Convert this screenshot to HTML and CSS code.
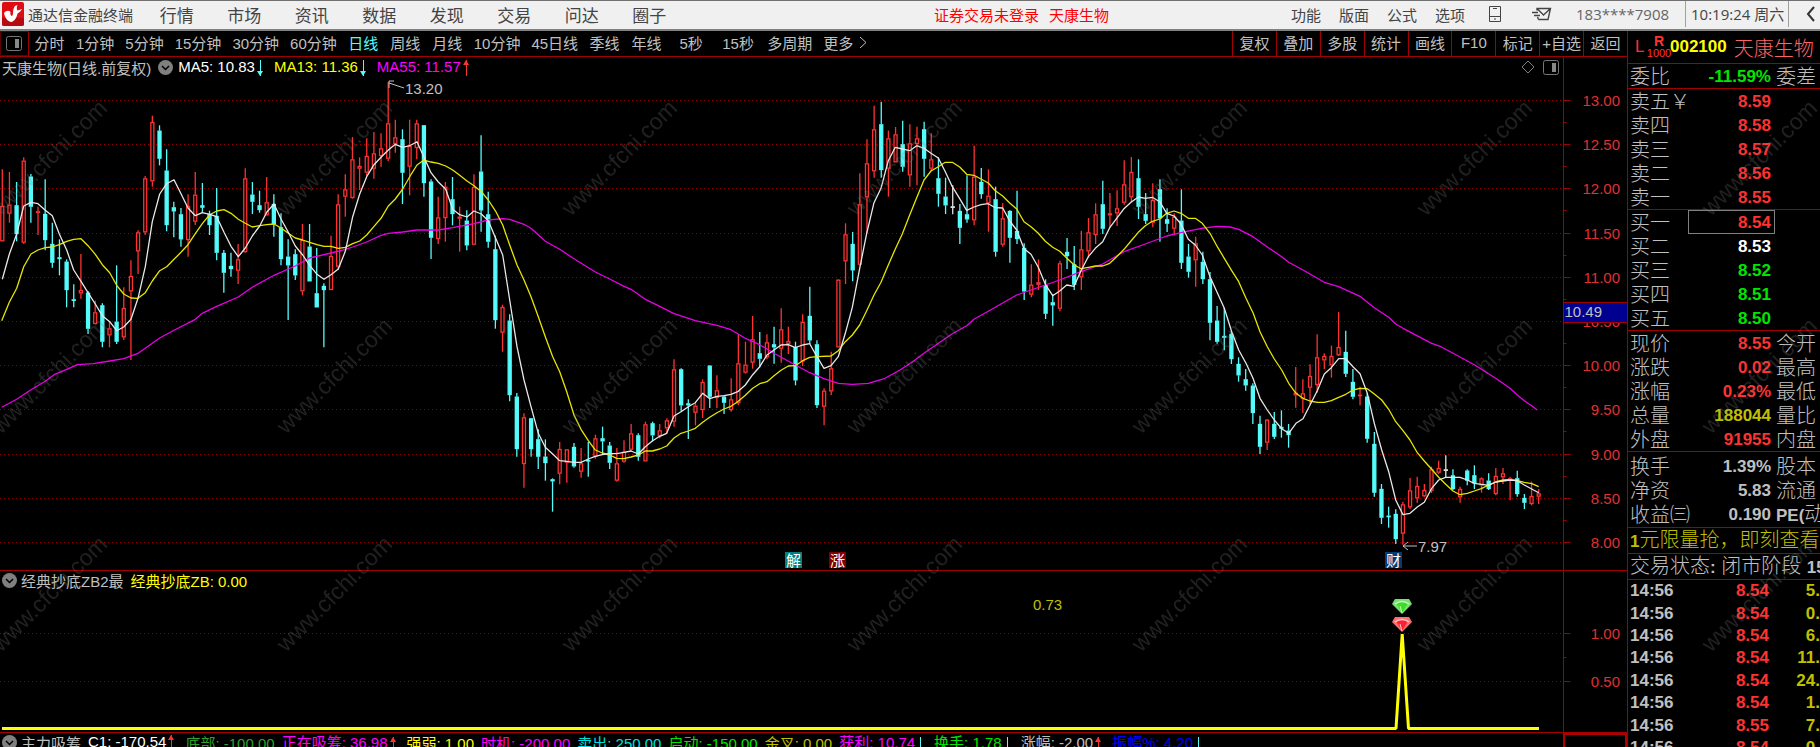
FILE: index.html
```html
<!DOCTYPE html>
<html lang="zh-CN">

<head>
    <meta charset="UTF-8">
    <meta name="viewport" content="width=device-width, initial-scale=1.0">
    <title>通达信金融终端</title>
    <link rel="stylesheet" href="styles.css">
</head>

<body>
    <!-- Top menu -->
    <header class="menubar">
        <svg class="logo" width="22" height="24" viewBox="0 0 22 24">
            <rect width="22" height="24" rx="2" fill="#e00c14"/>
            <path d="M0 16H22V22A2 2 0 0 1 20 24H2A2 2 0 0 1 0 22Z" fill="#b80812"/>
            <path d="M2 11C4 8.500 7 8 8.500 10C8 12 8.500 13.500 10 14C12 12 10 8 13 4L15.500 3C14.500 5 14.500 7 15.500 8.500L20 7C19 9.500 17 10.500 15.500 11.500C14.500 16 12.500 19.500 9 20C5 19 3 15.500 2 11Z" fill="#fff"/>
        </svg>
        <span class="app-name">通达信金融终端</span>
        <nav class="main-menu">
            <a href="#">行情</a>
            <a href="#">市场</a>
            <a href="#">资讯</a>
            <a href="#">数据</a>
            <a href="#">发现</a>
            <a href="#">交易</a>
            <a href="#">问达</a>
            <a href="#">圈子</a>
        </nav>
        <div class="login-state"><span>证券交易未登录</span><span>天康生物</span></div>
        <nav class="tool-menu">
            <a href="#">功能</a>
            <a href="#">版面</a>
            <a href="#">公式</a>
            <a href="#">选项</a>
        </nav>
        <button class="icon-btn phone" aria-label="手机">
            <svg width="14" height="18" viewBox="0 0 14 18" fill="none" stroke="#444">
                <path d="M1.500 1.500H12.500V16.500H1.500ZM1.500 11.500H12.500M5 3.500H9M6 14H8"/>
            </svg>
        </button>
        <button class="icon-btn mail" aria-label="消息">
            <svg width="20" height="14" viewBox="0 0 20 14" fill="none" stroke="#444" stroke-width="1.400">
                <path d="M5 3.500V1.500H18.500L16 12.500H6.500M5.500 2L11.500 8L18.500 1.500M0 5.500H6M2 8.500H8M6.500 12.500L5.500 10"/>
            </svg>
        </button>
        <span class="account">183****7908</span>
        <span class="clock">10:19:24 周六</span>
        <button class="icon-btn back" aria-label="收起">
            <svg width="10" height="16" viewBox="0 0 10 16" fill="none" stroke="#333" stroke-width="2">
                <path d="M8 1L2 8L8 15"/>
            </svg>
        </button>
    </header>

    <main class="workspace">
        <div class="left">
            <!-- Period toolbar -->
            <div class="toolbar">
                <button class="side-toggle" aria-label="侧栏">
                    <svg width="16" height="15" viewBox="0 0 16 15" fill="none" stroke="#777">
                        <rect x="0.500" y="0.500" width="15" height="14" rx="2"/>
                        <rect x="9" y="3" width="4" height="9" fill="#888" stroke="none"/>
                    </svg>
                </button>
                <div class="periods">
                    <button>分时</button>
                    <button>1分钟</button>
                    <button>5分钟</button>
                    <button>15分钟</button>
                    <button>30分钟</button>
                    <button>60分钟</button>
                    <button class="active">日线</button>
                    <button>周线</button>
                    <button>月线</button>
                    <button>10分钟</button>
                    <button>45日线</button>
                    <button>季线</button>
                    <button>年线</button>
                    <button class="seconds">5秒</button>
                    <button class="seconds">15秒</button>
                    <button>多周期</button>
                    <button>更多<svg class="more" width="8" height="13" viewBox="0 0 8 13" fill="none" stroke="#c0c0c0"><path d="M1 1L7 6.500L1 12"/></svg></button>
                </div>
                <div class="actions">
                    <button>复权</button>
                    <button>叠加</button>
                    <button>多股</button>
                    <button>统计</button>
                    <button>画线</button>
                    <button>F10</button>
                    <button>标记</button>
                    <button>+自选</button>
                    <button>返回</button>
                </div>
            </div>

            <!-- K line panel -->
            <section class="panel">
                <svg class="plot" id="kline"></svg>
                <div class="legend">
                    <span class="name">天康生物(日线.前复权)</span>
                    <button class="drop" aria-label="指标"><svg width="15" height="15" viewBox="0 0 15 15"><circle cx="7.500" cy="7.500" r="7.500" fill="#808080"/><path d="M4 6L7.500 9.500L11 6" fill="none" stroke="#000" stroke-width="1.500"/></svg></button>
                    <span class="white">MA5: 10.83<i class="down"></i></span>
                    <span class="yellow">MA13: 11.36<i class="down"></i></span>
                    <span class="magenta">MA55: 11.57<i class="up"></i></span>
                    <span class="corner">
                        <svg width="14" height="14" viewBox="0 0 14 14" fill="none" stroke="#808080"><path d="M7 1L13 7L7 13L1 7Z"/></svg>
                        <svg width="16" height="15" viewBox="0 0 16 15" fill="none" stroke="#777"><rect x="0.500" y="0.500" width="15" height="14" rx="2"/><rect x="9" y="3" width="4" height="9" fill="#888" stroke="none"/></svg>
                    </span>
                </div>
            </section>

            <!-- Indicator panel -->
            <section class="panel">
                <svg class="plot" id="signal"></svg>
                <div class="legend sub">
                    <button class="drop" aria-label="指标"><svg width="15" height="15" viewBox="0 0 15 15"><circle cx="7.500" cy="7.500" r="7.500" fill="#808080"/><path d="M4 6L7.500 9.500L11 6" fill="none" stroke="#000" stroke-width="1.500"/></svg></button>
                    <span class="name">经典抄底ZB2最</span>
                    <span class="yellow">经典抄底ZB: 0.00</span>
                </div>
            </section>

            <!-- Third panel, only its legend is in view -->
            <section class="panel last">
                <div class="legend sub">
                    <button class="drop" aria-label="指标"><svg width="15" height="15" viewBox="0 0 15 15"><circle cx="7.500" cy="7.500" r="7.500" fill="#808080"/><path d="M4 6L7.500 9.500L11 6" fill="none" stroke="#000" stroke-width="1.500"/></svg></button>
                    <span class="name">主力吸筹</span>
                    <span class="white">C1: -170.54<i class="up"></i></span>
                    <span class="dark-green">底部: -100.00</span>
                    <span class="magenta">正在吸筹: 36.98<i class="up"></i></span>
                    <span class="yellow">强弱: 1.00</span>
                    <span class="magenta">时机: -200.00</span>
                    <span class="cyan">卖出: 250.00</span>
                    <span class="green">启动: -150.00</span>
                    <span class="dim-yellow">金叉: 0.00</span>
                    <span class="magenta">获利: 10.74<i class="down"></i></span>
                    <span class="green">换手: 1.78<i class="down"></i></span>
                    <span class="grey">涨幅: -2.00<i class="up"></i></span>
                    <span class="blue">振幅%: 4.20<i class="down"></i></span>
                </div>
                <div class="axis-box"></div>
            </section>
        </div>

        <!-- Quote panel -->
        <aside class="quote">
            <div class="stock">
                <span class="tag">L</span>
                <span class="rank"><b>R</b><small>1000</small></span>
                <span class="code">002100</span>
                <span class="stock-name">天康生物</span>
            </div>
            <table class="rows">
                <tr><th>委比</th><td class="green">-11.59%</td><th>委差</th></tr>
            </table>
            <table class="rows">
                <tr><th>卖五￥</th><td class="red">8.59</td><th></th></tr>
                <tr><th>卖四</th><td class="red">8.58</td><th></th></tr>
                <tr><th>卖三</th><td class="red">8.57</td><th></th></tr>
                <tr><th>卖二</th><td class="red">8.56</td><th></th></tr>
                <tr><th>卖一</th><td class="red">8.55</td><th></th></tr>
            </table>
            <table class="rows">
                <tr><th>买一</th><td class="red boxed">8.54</td><th></th></tr>
                <tr><th>买二</th><td class="white">8.53</td><th></th></tr>
                <tr><th>买三</th><td class="green">8.52</td><th></th></tr>
                <tr><th>买四</th><td class="green">8.51</td><th></th></tr>
                <tr><th>买五</th><td class="green">8.50</td><th></th></tr>
            </table>
            <table class="rows">
                <tr><th>现价</th><td class="red">8.55</td><th>今开</th></tr>
                <tr><th>涨跌</th><td class="red">0.02</td><th>最高</th></tr>
                <tr><th>涨幅</th><td class="red">0.23%</td><th>最低</th></tr>
                <tr><th>总量</th><td class="dim-yellow">188044</td><th>量比</th></tr>
                <tr><th>外盘</th><td class="red">91955</td><th>内盘</th></tr>
            </table>
            <table class="rows extra">
                <tr><th>换手</th><td>1.39%</td><th>股本</th></tr>
                <tr><th>净资</th><td>5.83</td><th>流通</th></tr>
                <tr><th>收益㈢</th><td>0.190</td><th><b>PE(</b>动</th></tr>
            </table>
            <a class="promo" href="#"><b>1</b>元限量抢，即刻查看</a>
            <div class="status">交易状态<b>:</b> 闭市阶段 <b>15</b></div>
            <table class="ticks">
                <tr><td>14:56</td><td class="red">8.54</td><td class="dim-yellow">5.</td></tr>
                <tr><td>14:56</td><td class="red">8.54</td><td class="dim-yellow">0.</td></tr>
                <tr><td>14:56</td><td class="red">8.54</td><td class="dim-yellow">6.</td></tr>
                <tr><td>14:56</td><td class="red">8.54</td><td class="dim-yellow">11.</td></tr>
                <tr><td>14:56</td><td class="red">8.54</td><td class="dim-yellow">24.</td></tr>
                <tr><td>14:56</td><td class="red">8.54</td><td class="dim-yellow">1.</td></tr>
                <tr><td>14:56</td><td class="red">8.55</td><td class="dim-yellow">7.</td></tr>
                <tr><td>14:56</td><td class="red">8.54</td><td class="dim-yellow">0.</td></tr>
            </table>
        </aside>
    </main>

    <!-- Watermark over the whole window -->
    <svg class="watermark">
        <defs>
            <pattern id="mark" x="-20" y="95" width="285" height="218" patternUnits="userSpaceOnUse">
                <text x="21" y="122" transform="rotate(-45 21 122)">www.cfchi.com</text>
            </pattern>
        </defs>
        <rect width="100%" height="100%" fill="url(#mark)"/>
    </svg>

    <script src="chart.js"></script>
</body>

</html>
```

FILE: styles.css
```css
* {
    box-sizing: border-box;
}
body {
    margin: 0;
    height: 100vh;
    display: flex;
    flex-direction: column;
    overflow: hidden;
    background: #000;
    color: #c0c0c0;
    font-family: "Liberation Sans", "Noto Sans CJK SC", sans-serif;
    font-size: 15px;
    white-space: nowrap;
}
button {
    margin: 0;
    padding: 0;
    border: 0;
    background: none;
    color: inherit;
    font: inherit;
}
a {
    color: inherit;
    text-decoration: none;
}
svg {
    display: block;
}

/* Text colours */
.white { color: #fff; }
.grey { color: #c0c0c0; }
.yellow { color: #ff0; }
.dim-yellow { color: #c0c000; }
.magenta { color: #f0f; }
.cyan { color: #00e0e0; }
.green { color: #00e600; }
.dark-green { color: #2fa02f; }
.blue { color: #00f; }
.red { color: #ff3232; }

/* Top menu */
.menubar {
    height: 31px;
    flex: none;
    display: flex;
    align-items: center;
    padding-bottom: 2px;
    background: #f0f0f0;
    border-top: 1px solid #707070;
    border-bottom: 2px solid #808080;
    color: #444;
}
.logo {
    margin-left: 2px;
}
.app-name {
    margin-left: 4px;
}
.main-menu {
    width: 540px;
    margin-left: 10px;
    display: grid;
    grid-template-columns: repeat(8, 1fr);
    text-align: center;
    font-size: 17px;
}
.login-state {
    display: flex;
    gap: 10px;
    margin-left: auto;
    margin-right: 182px;
    color: #f00;
}
.tool-menu {
    display: flex;
    gap: 18px;
}
.phone {
    margin-left: 23px;
}
.mail {
    margin-left: 30px;
}
.account {
    margin-left: 24px;
    width: 109px;
    font-family: "Open Sans", "Noto Sans CJK SC", sans-serif;
    color: #666;
}
.clock {
    width: 104px;
    padding-left: 5px;
    line-height: 26px;
    border-left: 1px solid #a0a0a0;
    border-right: 1px solid #a0a0a0;
    font-family: "Open Sans", "Noto Sans CJK SC", sans-serif;
}
.back {
    margin: 0 4px 0 17px;
}

/* Workspace */
.workspace {
    flex: 1;
    min-height: 0;
    display: grid;
    grid-template-columns: 1fr 193px;
}
.left {
    min-width: 0;
    min-height: 0;
    display: grid;
    grid-template-rows: 26px 514fr 162fr 14px;
    grid-template-columns: 100%;
}
.toolbar {
    display: flex;
    border-bottom: 1px solid #a00000;
}
.toolbar button {
    padding-bottom: 2px;
}
.toolbar .side-toggle {
    width: 29px;
    padding: 0 0 0 5px;
    border: 1px solid #600000;
    border-right-color: #a00000;
}
.periods {
    display: flex;
    gap: 11px;
    padding-left: 5px;
}
.periods button {
    min-width: 31px;
}
.periods .seconds {
    min-width: 36px;
}
.periods .active {
    color: #54fcfc;
}
.more {
    display: inline-block;
    margin-left: 6px;
}
.actions {
    width: 395px;
    margin-left: auto;
    display: grid;
    grid-template-columns: repeat(9, 1fr);
}
.actions button {
    border-left: 1px solid #a00000;
}

/* Chart panels */
.panel {
    position: relative;
    min-height: 0;
    overflow: hidden;
    border-bottom: 1px solid #a00000;
}
.plot {
    position: absolute;
    top: 0;
    left: 0;
    width: 100%;
    height: 100%;
    font-size: 15px;
}
.legend {
    position: relative;
    display: flex;
    align-items: center;
    height: 20px;
    padding-left: 2px;
}
.legend .drop {
    margin: 0 5px 0 7px;
}
.legend span + span {
    margin-left: 7px;
}
.legend i {
    position: relative;
    display: inline-block;
    width: 1px;
    height: 16px;
    margin: 0 6px 0 5px;
    vertical-align: middle;
    background: currentColor;
}
.legend i::after {
    content: "";
    position: absolute;
    left: -3px;
    border: 3px solid transparent;
}
.legend .down {
    color: #54fcfc;
}
.legend .down::after {
    bottom: 0;
    border-top: 5px solid #54fcfc;
    border-bottom: 0;
}
.legend .up {
    color: #ff3232;
}
.legend .up::after {
    top: 0;
    border-bottom: 5px solid #ff3232;
    border-top: 0;
}
.legend .corner {
    display: flex;
    gap: 8px;
    margin-left: auto;
    padding-right: 68px;
}
.legend.sub {
    height: 18px;
}
.legend.sub .drop {
    margin: 0 4px 0 0;
}
.last {
    display: grid;
    grid-template-columns: 1fr 64px;
    border-bottom: 0;
}
.axis-box {
    border: solid #b00000;
    border-width: 2px 2px 0;
}

/* Chart drawing */
.grid-line {
    stroke: #980000;
    stroke-dasharray: 1 3;
}
.axis {
    stroke: #a00000;
}
.axis-text {
    fill: #e03030;
    text-anchor: end;
}
.rise,
.fall,
.flat {
    stroke-width: 1.3;
}
.rise {
    fill: #000;
    stroke: #ff3232;
}
.fall {
    fill: #54fcfc;
    stroke: #54fcfc;
}
.flat {
    fill: #e0e0e0;
    stroke: #e0e0e0;
}
.line {
    fill: none;
    stroke-width: 1.3;
    stroke-linejoin: round;
}
.ma5 { stroke: #e8e8e8; }
.ma13 { stroke: #e6e600; }
.ma55 { stroke: #e800e8; }
.note { fill: #c0c0c0; }
.note-line {
    fill: none;
    stroke: #c0c0c0;
}
.cursor-box {
    fill: #000090;
    stroke: #a00000;
}
.badge-text {
    fill: #fff;
    text-anchor: middle;
}
.signal-line {
    fill: none;
    stroke: #ff0;
    stroke-width: 3;
}

/* Quote panel */
.quote {
    min-width: 0;
    min-height: 0;
    overflow: hidden;
    border-left: 1px solid #a00000;
    font-size: 20px;
    font-weight: 300;
}
.quote b,
.quote td {
    font-size: 17px;
    font-weight: 700;
}
.stock {
    display: flex;
    align-items: center;
    height: 33px;
    padding-left: 7px;
    border-bottom: 1px solid #a00000;
}
.tag {
    width: 13px;
    font-size: 17px;
    color: #ff3232;
}
.rank {
    display: flex;
    flex-direction: column;
    width: 22px;
    align-items: center;
    color: #ff3232;
}
.quote .rank b {
    font-size: 14px;
    line-height: 13px;
}
.rank small {
    font-size: 11px;
    line-height: 11px;
}
.code {
    font-size: 17px;
    font-weight: 700;
    color: #ff0;
}
.stock-name {
    margin-left: 7px;
    color: #ff6464;
}
.rows {
    width: 100%;
    table-layout: fixed;
    border-collapse: separate;
    border-spacing: 0;
    border-bottom: 1px solid #a00000;
}
.rows tr {
    height: 24px;
}
.rows th,
.rows td {
    height: 24px;
    padding: 2px 0 0;
    line-height: 20px;
    font-weight: 300;
}
.rows th {
    width: 60px;
    padding-left: 2px;
    text-align: left;
}
.rows td {
    width: 87px;
    padding-right: 3px;
    border: 1px solid transparent;
    text-align: right;
    font-weight: 700;
}
.rows th:last-child {
    width: 45px;
    padding-left: 1px;
}
.rows .boxed {
    border-color: #808080;
}
.extra {
    padding: 2px 0 1px;
}
.promo,
.status {
    display: block;
    height: 26px;
    padding-left: 2px;
    line-height: 25px;
    border-bottom: 1px solid #a00000;
}
.promo {
    color: #c0c000;
}
.ticks {
    width: 100%;
    table-layout: fixed;
    border-collapse: collapse;
}
.ticks td {
    height: 3vh;
    padding: 0 0 0 2px;
    line-height: 20px;
}
.ticks td + td {
    text-align: right;
}
.ticks td:nth-child(2) {
    width: 80px;
    padding-right: 3px;
}
.ticks td:last-child {
    width: 48px;
}

/* Watermark */
.watermark {
    position: fixed;
    top: 0;
    left: 0;
    width: 100%;
    height: 100%;
    pointer-events: none;
}
.watermark text {
    font-size: 23px;
    fill: #808080;
    fill-opacity: 0.25;
}
```

FILE: chart.js
```js
// Candles: kind (r = rise, c = fall, w = flat), high, body top, body bottom, low.
// Levels are in thirds of a unit of the base layout.
const candles = `r298,408,514,514 r306,404,431,458 c336,406,492,514 r262,272,518,522 c312,320,410,458 r410,424,427,495
c328,432,510,541 c458,522,578,593 c508,562,567,616 c568,575,660,712 c643,688,690,712 r552,660,670,686
c663,668,776,792 r692,727,762,762 c700,706,815,832 r754,775,796,832 c586,755,815,822 r652,714,802,810
r571,618,664,870 r481,487,544,612 r318,325,487,495 r137,156,334,350 c166,182,266,286 c238,302,465,484
c395,412,424,502 c414,433,508,530 r373,408,510,560 r306,374,455,465 c339,406,413,428 c422,432,465,495
c354,438,548,571 c540,549,608,668 c548,588,597,620 r522,568,602,642 r295,325,546,548 c336,374,395,432
c362,406,420,428 r321,397,436,436 c373,402,462,500 c430,472,567,586 c508,560,586,750 c538,553,616,630
r462,510,664,676 c462,530,634,634 c534,670,712,712 c640,648,660,832 r497,558,660,660 r373,403,590,600
r313,358,380,440 r201,268,384,386 r262,288,296,360 r205,258,308,318 r186,250,296,326 r190,235,258,290
r36,160,266,274 r149,202,222,248 c178,208,308,402 r149,228,290,376 r149,160,234,268 c166,166,339,380
c328,335,503,567 r380,442,507,522 r336,350,444,515 c321,388,432,466 r410,440,446,545 c421,452,526,541
r313,351,524,524 c196,305,421,485 c365,433,515,533 c497,538,750,776 r704,711,788,845 c733,752,975,994
c969,980,1137,1160 r1030,1042,1182,1253 c1045,1045,1137,1160 c1078,1108,1160,1197 c1108,1160,1179,1232 c1225,1228,1234,1325
r1116,1137,1211,1243 r1138,1138,1178,1238 c1119,1131,1189,1193 r1134,1180,1205,1223 c1116,1170,1174,1220 r1094,1105,1160,1166
c1070,1105,1114,1155 c1116,1127,1178,1197 r1134,1180,1232,1235 r1111,1145,1175,1178 r1062,1090,1139,1145 c1090,1096,1160,1172
r1055,1063,1174,1174 c1055,1060,1096,1114 r1062,1081,1098,1105 r1045,1051,1075,1090 r868,898,1055,1070 c895,898,1006,1024
c988,1000,1006,1107 r1000,1007,1028,1066 r928,936,1020,1044 c886,887,980,1014 r916,961,984,1014 c978,980,998,1032
r925,988,1020,1025 r793,880,1000,1006 r815,884,908,911 r738,808,878,896 c786,850,866,892 r793,817,862,868
c770,823,832,881 r715,778,836,878 r770,813,822,852 c815,832,931,946 r733,756,874,888 c650,738,811,822
c811,823,1005,1014 r955,962,1010,1066 r845,895,964,975 r628,629,832,832 r460,493,574,642 c486,522,601,634
r310,403,584,586 r208,280,382,490 r107,178,304,323 c95,163,300,323 r182,205,296,380 r171,193,277,277
c152,223,290,305 r163,220,316,350 r170,205,222,346 c155,178,266,320 r190,268,296,304 c262,325,371,410
c323,380,406,432 w346,409,410,433 c402,423,473,522 c316,433,448,458 r227,320,451,466 c294,336,372,386
r298,377,400,485 c350,388,545,560 r400,445,524,530 c421,423,503,578 c362,483,507,522 c520,534,664,690
r583,644,674,682 r568,637,644,660 c628,646,731,747 c672,697,706,767 r572,580,716,724 c504,546,558,597
c528,583,644,660 r482,538,622,660 r444,487,544,564 r400,433,495,522 c332,403,476,492 r369,430,436,473
r361,415,430,468 r271,343,398,404 r261,306,382,397 c268,325,410,447 c369,433,452,462 r340,390,458,472
c328,358,445,515 c415,448,461,486 r430,440,476,496 c358,452,578,597 c522,560,605,623 r500,520,571,650
c545,576,627,642 c606,628,758,811 c708,752,815,821 c713,798,803,841 c783,792,867,882 c862,882,916,935
c897,928,946,962 c940,947,1029,1062 c1037,1062,1130,1152 r1047,1049,1118,1140 c1026,1062,1100,1107 c1021,1071,1076,1103
c1062,1082,1095,1133 r891,968,976,1013 r928,970,986,1029 r883,918,953,1002 r793,862,945,968 r850,858,871,897
r827,858,886,923 r726,831,856,858 c782,846,911,921 c897,936,980,988 r950,974,977,1006 c970,980,1106,1118
c1086,1122,1268,1280 c1242,1257,1343,1362 c1310,1337,1340,1373 c1318,1332,1407,1422 r1295,1303,1391,1424 r1224,1261,1312,1317
r1220,1248,1285,1298 r1242,1260,1279,1282 r1190,1198,1262,1269 r1172,1194,1208,1212 w1156,1198,1200,1222 c1198,1216,1257,1260
r1250,1257,1282,1298 c1198,1202,1232,1246 c1186,1216,1240,1257 r1222,1225,1246,1268 c1210,1232,1257,1260 r1194,1218,1272,1276
r1194,1210,1222,1242 r1220,1225,1230,1291 c1202,1225,1272,1280 c1272,1284,1298,1317 r1235,1278,1302,1306 r1257,1270,1280,1302`;

const ma5 = `7,628 28,553 50,492 71,408 93,397 114,401 136,421 157,437 178,492 200,540 221,600 243,634 264,668 286,702 307,737
329,755 350,782 371,771 393,748 414,685 436,590 457,455 479,372 500,341 522,329 543,371 564,414 586,437 607,428 629,433
650,440 672,487 693,529 715,560 736,534 757,498 779,468 800,427 822,402 843,447 865,487 886,528 908,555 929,586 951,613
972,628 993,614 1015,597 1036,544 1058,440 1079,372 1100,320 1122,284 1143,262 1165,240 1186,223 1208,232 1229,227
1251,215 1272,262 1293,308 1315,336 1337,358 1358,418 1379,434 1401,441 1422,423 1444,432 1465,452 1487,505 1508,555
1529,690 1551,830 1572,930 1593,1010 1615,1090 1636,1132 1658,1152 1679,1172 1700,1174 1722,1177 1743,1177 1765,1167
1786,1159 1807,1154 1829,1151 1850,1151 1872,1147 1893,1143 1915,1152 1936,1130 1957,1113 1979,1099 2000,1090 2022,1038
2043,1025 2065,1010 2086,998 2108,970 2129,986 2151,979 2172,977 2193,973 2215,964 2236,945 2258,914 2279,890 2301,855
2322,840 2343,825 2365,824 2386,833 2408,825 2429,821 2451,860 2472,895 2493,887 2515,860 2536,790 2557,712 2579,595
2600,490 2622,398 2643,355 2665,272 2686,232 2707,237 2729,242 2750,227 2772,235 2793,250 2815,264 2836,305 2857,350
2879,386 2900,421 2922,411 2943,404 2965,401 2986,413 3008,414 3029,453 3050,480 3072,536 3093,553 3115,592 3136,643
3158,677 3179,663 3200,645 3222,649 3243,602 3265,560 3286,535 3308,515 3329,473 3350,445 3372,416 3393,397 3415,381
3436,385 3457,382 3479,395 3500,430 3522,438 3543,462 3565,508 3586,525 3607,555 3630,620 3652,668 3673,715 3695,785
3716,840 3738,880 3759,925 3780,985 3802,1020 3823,1050 3845,1076 3866,1090 3888,1060 3909,1046 3930,1005 3952,962
3973,912 3994,893 4016,866 4037,866 4059,890 4080,911 4102,970 4123,1060 4145,1140 4166,1205 4187,1290 4209,1334
4230,1330 4252,1311 4273,1297 4295,1255 4316,1230 4337,1222 4380,1222 4402,1230 4423,1240 4466,1246 4487,1236 4530,1230
4552,1232 4573,1245 4595,1257 4616,1268`;

const ma13 = `5,752 28,697 50,655 71,590 93,552 114,540 136,533 157,531 178,524 200,514 221,508 243,506 264,527 286,553
307,584 329,608 350,646 371,672 393,684 414,685 436,668 457,633 479,602 500,590 522,568 543,547 564,524 586,491 607,461
629,434 650,423 672,419 693,430 715,448 736,460 757,471 779,467 800,464 822,462 843,474 865,490 886,504 908,510 929,517
951,524 972,529 993,529 1015,535 1036,532 1058,521 1079,513 1100,495 1122,469 1143,445 1165,408 1186,387 1208,357
1229,320 1251,285 1272,270 1293,276 1315,280 1337,288 1358,300 1379,316 1401,333 1422,347 1444,365 1465,390 1487,424
1508,465 1529,525 1551,585 1572,630 1593,680 1615,740 1636,800 1658,860 1679,905 1700,965 1722,1035 1743,1078 1765,1112
1786,1140 1807,1149 1829,1155 1850,1165 1872,1166 1893,1161 1915,1155 1936,1143 1957,1143 1979,1137 2000,1128 2022,1104
2043,1090 2065,1083 2086,1075 2108,1057 2129,1042 2151,1028 2172,1017 2193,1009 2215,994 2236,976 2258,955 2279,941
2301,935 2322,917 2343,901 2365,888 2386,887 2408,872 2429,862 2451,860 2493,858 2515,842 2536,815 2557,795 2579,765
2600,722 2622,675 2643,637 2665,585 2686,537 2707,492 2729,435 2750,383 2772,330 2793,303 2815,290 2836,277 2857,277
2879,291 2900,313 2922,316 2943,327 2965,339 2986,362 3008,378 3029,399 3050,417 3072,455 3093,470 3115,490 3136,514
3158,532 3179,544 3200,564 3222,584 3243,596 3265,592 3286,588 3308,588 3329,580 3350,560 3372,538 3393,513 3415,487
3436,467 3457,454 3479,447 3500,430 3522,423 3543,430 3565,445 3586,445 3607,460 3630,490 3652,530 3673,565 3695,602
3716,635 3738,685 3759,728 3780,785 3802,830 3823,867 3845,900 3866,940 3888,970 3909,985 3930,993 3952,997 3973,997
3994,992 4016,982 4037,973 4059,960 4080,955 4102,956 4123,972 4145,990 4166,1018 4187,1055 4209,1082 4230,1110
4252,1148 4273,1173 4295,1198 4316,1222 4337,1243 4359,1263 4380,1274 4402,1270 4423,1263 4444,1256 4466,1245 4487,1236
4509,1230 4530,1229 4552,1232 4573,1237 4595,1241 4616,1250`;

const ma55 = `5,1012 50,988 93,959 136,934 164,913 200,898 232,884 280,881 329,873 371,866 414,850 436,835 479,804 522,781
586,748 607,730 650,709 715,681 757,652 822,616 865,597 886,588 929,564 993,549 1036,538 1058,531 1100,516 1143,496
1165,490 1208,486 1251,480 1315,480 1358,473 1422,461 1465,450 1508,446 1529,448 1572,463 1593,475 1636,514 1679,538
1722,566 1786,606 1829,627 1872,649 1893,658 1936,688 1979,709 2022,731 2086,752 2151,766 2193,779 2236,805 2279,824
2322,850 2386,885 2429,908 2472,926 2515,940 2557,943 2605,940 2655,925 2700,900 2742,872 2772,850 2857,791 2900,767
2922,748 2986,712 3050,675 3093,660 3179,630 3243,605 3308,582 3372,545 3436,522 3500,498 3543,488 3586,479 3612,474
3652,469 3690,471 3716,478 3759,500 3802,531 3845,560 3866,577 3909,600 3973,637 4016,650 4080,679 4123,713 4166,742
4187,762 4209,775 4295,820 4323,830 4359,850 4423,884 4487,925 4530,955 4552,975 4573,992 4595,1007 4612,1020`;

// Base size of the panels, everything is scaled from it
const BASE_WIDTH = 1627;
const AXIS_WIDTH = 64;

function add(parent, name, attrs, text) {
    const el = document.createElementNS('http://www.w3.org/2000/svg', name);
    for (const key in attrs) {
        el.setAttribute(key, attrs[key]);
    }
    if (text) {
        el.textContent = text;
    }
    parent.appendChild(el);
    return el;
}

function gridRow(svg, right, width, y, label) {
    const row = Math.round(y) + 0.5;
    add(svg, 'line', { class: 'grid-line', x1: 0, x2: right, y1: row, y2: row });
    add(svg, 'line', { class: 'axis', x1: right, x2: right + 7, y1: row, y2: row });
    add(svg, 'text', { class: 'axis-text', x: width - 7, y: row + 5 }, label);
}

function tick(svg, right, y) {
    const row = Math.round(y) + 0.5;
    add(svg, 'line', { class: 'axis', x1: right, x2: right + 3, y1: row, y2: row });
}

function drawKline() {
    const svg = document.getElementById('kline');
    const width = svg.clientWidth;
    const height = svg.clientHeight;
    const right = width - AXIS_WIDTH + 0.5;
    const sx = width / BASE_WIDTH;
    const sy = height / 513;
    const Y = v => (v / 3 + 13) * sy;
    svg.textContent = '';

    for (let i = 0; i <= 10; i++) {
        const y = (43 + i * 44.2) * sy;
        gridRow(svg, right, width, y, (13 - i * 0.5).toFixed(2));
        if (i < 10) {
            tick(svg, right, y + 22 * sy);
        }
    }
    add(svg, 'line', { class: 'axis', x1: right, x2: right, y1: 0, y2: height });

    candles.split(/\s+/).forEach((item, i) => {
        const [high, top, bottom, low] = item.slice(1).split(',').map(v => Y(Number(v)));
        const x = (2.3 + i * 7.146) * sx;
        const kind = { r: 'rise', c: 'fall', w: 'flat' }[item[0]];
        const g = add(svg, 'g', { class: kind });
        add(g, 'line', { x1: x, x2: x, y1: high, y2: top });
        add(g, 'line', { x1: x, x2: x, y1: bottom, y2: low });
        add(g, 'rect', { x: x - 1.5, y: top + 0.5, width: 3, height: Math.max(bottom - top - 1, 0.5) });
    });

    [[ma55, 'ma55'], [ma13, 'ma13'], [ma5, 'ma5']].forEach(([data, name]) => {
        const points = data.split(/\s+/).map(p => {
            const [x, y] = p.split(',').map(Number);
            return (x / 3 * sx).toFixed(1) + ',' + Y(y).toFixed(1);
        });
        add(svg, 'polyline', { class: 'line ' + name, points: points.join(' ') });
    });

    // Highest and lowest price
    const hi = add(svg, 'g', { transform: `translate(${389 * sx} ${26 * sy})` });
    add(hi, 'path', { class: 'note-line', d: 'M15 5L0 0M5 -2H0V5' });
    add(hi, 'text', { class: 'note', x: 16, y: 11 }, '13.20');
    const lo = add(svg, 'g', { transform: `translate(${1403 * sx} ${489 * sy})` });
    add(lo, 'path', { class: 'note-line', d: 'M14 0H0M5 -4L0 0L5 4' });
    add(lo, 'text', { class: 'note', x: 15, y: 6 }, '7.97');

    // Event badges
    [[785, '解', '#008080'], [829, '涨', '#800000'], [1385, '财', '#003c78']].forEach(([x, text, color]) => {
        add(svg, 'rect', { x: x * sx, y: height - 18, width: 17, height: 16, fill: color });
        add(svg, 'text', { class: 'badge-text', x: x * sx + 8.5, y: height - 4 }, text);
    });

    // Price under the cursor
    add(svg, 'rect', { class: 'cursor-box', x: right, y: Math.round(245 * sy) + 0.5, width: AXIS_WIDTH, height: 20 });
    add(svg, 'text', { class: 'note', x: right + 1, y: Math.round(245 * sy) + 15 }, '10.49');
}

function gem(svg, x, y, light, mid, dark) {
    const g = add(svg, 'g', { transform: `translate(${x} ${y})` });
    add(g, 'path', { d: 'M-7 0H7L10 5L0 15L-10 5Z', fill: mid });
    add(g, 'path', { d: 'M-6 4Q0 0 6 4L0 14Z', fill: dark });
    add(g, 'path', { d: 'M-7 5Q0 0 7 5', fill: 'none', stroke: light, 'stroke-width': 1.5 });
    add(g, 'path', { d: 'M-2 7L0 14', stroke: light });
}

function drawSignal() {
    const svg = document.getElementById('signal');
    const width = svg.clientWidth;
    const height = svg.clientHeight;
    const right = width - AXIS_WIDTH + 0.5;
    const sx = width / BASE_WIDTH;
    const sy = height / 161;
    svg.textContent = '';

    gridRow(svg, right, width, 62 * sy, '1.00');
    tick(svg, right, 86 * sy);
    gridRow(svg, right, width, 110 * sy, '0.50');
    add(svg, 'line', { class: 'axis', x1: right, x2: right, y1: 0, y2: height });

    const base = height - 3.5;
    const points = [[2, base], [1396 * sx, base], [1402.2 * sx, 63 * sy], [1408.5 * sx, base], [1539 * sx, base]];
    add(svg, 'polyline', { class: 'signal-line', points: points.join(' '), 'stroke-linejoin': 'bevel' });
    add(svg, 'text', { x: 1033 * sx, y: 39 * sy, fill: '#c0c000' }, '0.73');
    gem(svg, 1402 * sx, 28 * sy, '#c8ffc0', '#78e070', '#3cdc28');
    gem(svg, 1402 * sx, 46 * sy, '#ffd0d0', '#ff6e6e', '#ff1e32');
}

function draw() {
    drawKline();
    drawSignal();
}

window.addEventListener('resize', draw);
draw();
```
